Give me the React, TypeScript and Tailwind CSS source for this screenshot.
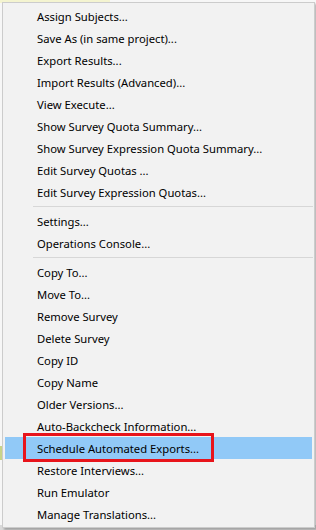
import React from "react";

type Entry = { label: string; sep?: false; active?: boolean } | { sep: true };

const entries: Entry[] = [
  { label: "Assign Subjects..." },
  { label: "Save As (in same project)..." },
  { label: "Export Results..." },
  { label: "Import Results (Advanced)..." },
  { label: "View Execute..." },
  { label: "Show Survey Quota Summary..." },
  { label: "Show Survey Expression Quota Summary..." },
  { label: "Edit Survey Quotas ..." },
  { label: "Edit Survey Expression Quotas..." },
  { sep: true },
  { label: "Settings..." },
  { label: "Operations Console..." },
  { sep: true },
  { label: "Copy To..." },
  { label: "Move To..." },
  { label: "Remove Survey" },
  { label: "Delete Survey" },
  { label: "Copy ID" },
  { label: "Copy Name" },
  { label: "Older Versions..." },
  { label: "Auto-Backcheck Information..." },
  { label: "Schedule Automated Exports...", active: true },
  { label: "Restore Interviews..." },
  { label: "Run Emulator" },
  { label: "Manage Translations..." },
];

export default function App() {
  return (
    <div
      className="relative w-[316px] h-[530px] overflow-hidden bg-[#f7f7f7]"
      style={{ fontFamily: '"Noto Sans", "Liberation Sans", sans-serif' }}
    >
      {/* background hints behind the menu */}
      <div className="absolute left-0 top-0 w-[110px] h-[3px] bg-[#f4f4d0]" />
      <div className="absolute left-0 top-[446px] w-[2px] h-[14px] bg-[#c9d48a]" />
      <div className="absolute left-0 top-[525px] w-[316px] h-[5px] bg-[#d9d9d9]" />

      <div className="absolute left-[2px] top-[2px] w-[313px] border border-[#cccccc] bg-[#f2f2f2] pt-[2px] pb-[2px] shadow-[2px_2px_2px_rgba(0,0,0,0.25)]">
        {entries.map((e, i) =>
          "sep" in e && e.sep ? (
            <div key={i} className="h-[7px] flex items-center pl-[30px] pr-[1px]">
              <div className="h-px w-full bg-[#d7d7d7]" />
            </div>
          ) : (
            <div
              key={i}
              className={
                "relative mx-[2px] h-[22px] flex items-center pl-[32px] pt-[1px] text-[11.25px] leading-none text-black whitespace-nowrap " +
                ((e as { active?: boolean }).active ? "bg-[#91c9f7]" : "")
              }
            >
              {(e as { label: string }).label}
              {(e as { active?: boolean }).active && (
                <div className="absolute left-[18px] top-[-4px] w-[191px] h-[29px] border-[3px] border-[#e8141b]" />
              )}
            </div>
          )
        )}
      </div>
    </div>
  );
}
